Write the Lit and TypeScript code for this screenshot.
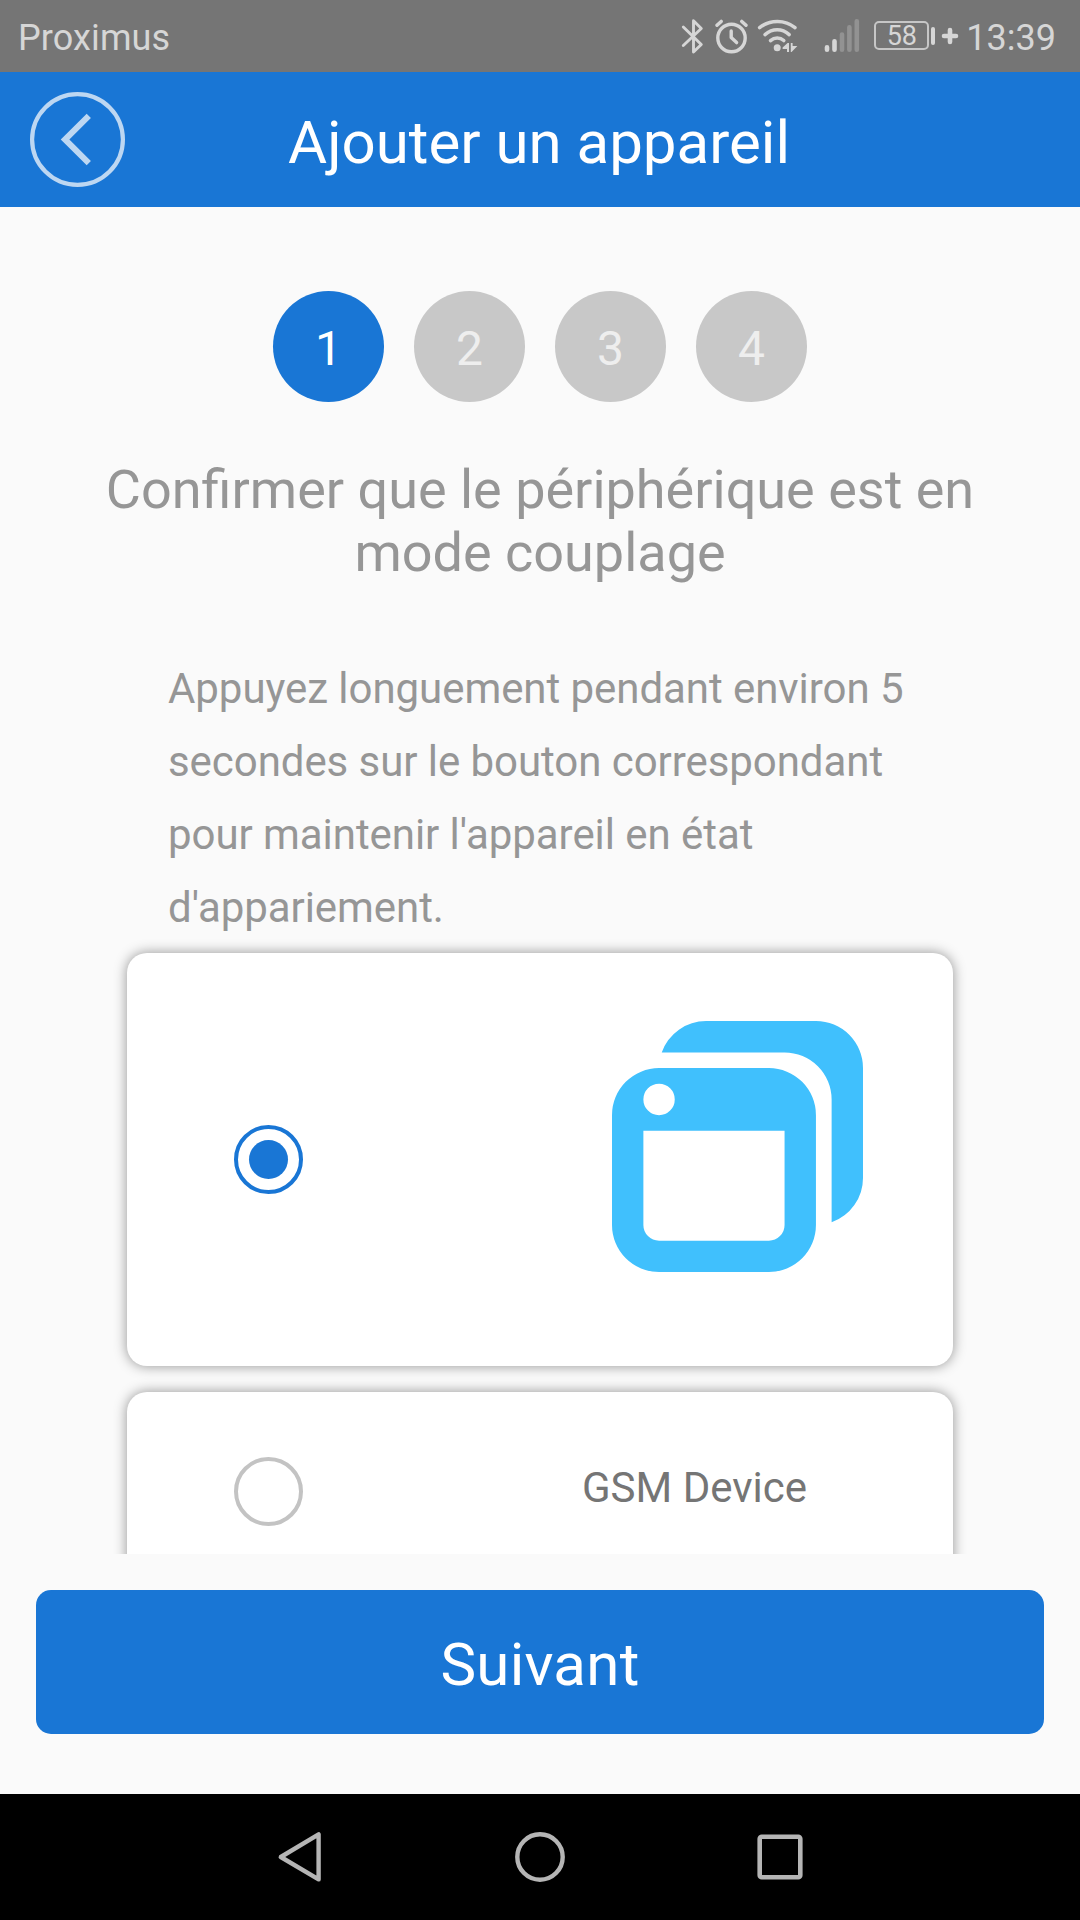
import { LitElement, html, css, svg } from "lit";
import { customElement, state } from "lit/decorators.js";
import { classMap } from "lit/directives/class-map.js";

const bluetoothIcon = svg`
  <svg width="24" height="40" viewBox="680 16 24 40" fill="none" stroke="#d6d6d6" stroke-width="2.9" stroke-linejoin="round" stroke-linecap="round">
    <path d="M683.3 27 L701.3 44.5 L693.5 52 V20.7 L701.3 28.5 L683.3 45.5" />
  </svg>`;

const alarmIcon = svg`
  <svg width="34" height="40" viewBox="714 16 34 40" fill="none" stroke="#d6d6d6" stroke-width="3.4" stroke-linecap="round" stroke-linejoin="round">
    <circle cx="731.5" cy="38" r="13.7" />
    <path d="M731.2 31 V37.5 L736.6 42.6" />
    <path d="M717 25.3 L721.2 21.4 M746 25.3 L741.8 21.4" />
  </svg>`;

const wifiIcon = svg`
  <svg width="42" height="40" viewBox="756 16 42 40" fill="none" stroke="#d6d6d6" stroke-width="3.5" stroke-linecap="round">
    <path d="M759.6 27.6 C770 19.3 785 19.3 795 27.6" />
    <path d="M765 34.6 C772.5 28.2 782 28.2 789.2 34.6" />
    <path d="M770.5 40.6 C774.5 37 780 37 783.8 40.6" />
    <circle cx="777.2" cy="47.8" r="3.5" fill="#d6d6d6" stroke="none" />
    <path d="M789 43 V52 H787 V49 H782.6 V47.5 L787.6 43 Z M790.8 43 H792.6 V46 H797.4 L791.6 52 H790.8 Z" fill="#d6d6d6" stroke="none" />
  </svg>`;

const signalIcon = svg`
  <svg width="38" height="40" viewBox="823 16 38 40" fill="none" stroke-width="4.6" stroke-linecap="round">
    <path d="M827 47.3 V49.7 M834.5 41.2 V49.7" stroke="#d6d6d6" />
    <path d="M842 34.5 V49.7 M849.4 27.3 V49.7 M856.8 21.3 V49.7" stroke="#929292" />
  </svg>`;

const backIcon = svg`
  <svg width="95" height="95" viewBox="0 0 95 95" fill="none" stroke="#bdd7f2">
    <circle cx="47.5" cy="47.5" r="45.4" stroke-width="4.2" />
    <path d="M58.8 23.8 L35 47.5 L58.8 71.2" stroke-width="6" />
  </svg>`;

const windowsIcon = svg`
  <svg width="251" height="251" viewBox="0 0 16 16" fill="#40c0fd">
    <path d="M3.17 2 A3 3 0 0 1 6 0 H13 A3 3 0 0 1 16 3 V10 A3 3 0 0 1 14 12.83 V5 A3 3 0 0 0 11 2 Z" />
    <path fill-rule="evenodd" d="M3 3 H10 A3 3 0 0 1 13 6 V13 A3 3 0 0 1 10 16 H3 A3 3 0 0 1 0 13 V6 A3 3 0 0 1 3 3 Z M4 5 A1 1 0 1 0 2 5 A1 1 0 1 0 4 5 Z M2 7 V13 A1 1 0 0 0 3 14 H10 A1 1 0 0 0 11 13 V7 Z" />
  </svg>`;

const navBackIcon = svg`
  <svg width="60" height="60" viewBox="270 1827 60 60" fill="none" stroke="#b5b5b5" stroke-width="4.4" stroke-linejoin="round">
    <path d="M318.6 1834.4 V1879.4 L280.8 1857 Z" />
  </svg>`;

const navHomeIcon = svg`
  <svg width="60" height="60" viewBox="0 0 60 60" fill="none" stroke="#b5b5b5" stroke-width="4.4">
    <circle cx="30" cy="30" r="22.7" />
  </svg>`;

const navRecentIcon = svg`
  <svg width="60" height="60" viewBox="0 0 60 60" fill="none" stroke="#b5b5b5" stroke-width="4.6">
    <rect x="9.7" y="9.7" width="40.6" height="40.6" rx="2" />
  </svg>`;

@customElement("status-bar")
class StatusBar extends LitElement {
  static styles = css`
    :host {
      display: flex;
      align-items: center;
      height: 72px;
      flex: none;
      padding: 0 24px 0 18px;
      background: #757575;
      color: #d6d6d6;
      font-size: 36px;
    }
    svg { display: block; flex: none; }
    .carrier { flex: 1; padding-top: 4px; letter-spacing: 0.12px; }
    .icons { display: flex; align-items: center; }
    .alarm { margin-left: 10px; }
    .wifi { margin-left: 8px; }
    .signal { margin-left: 25px; }
    .battery {
      box-sizing: border-box;
      width: 55px;
      height: 29px;
      margin: 0 0 1px 13px;
      border: 2px solid #c6c6c6;
      border-radius: 5px;
      font-size: 27px;
      line-height: 26px;
      text-align: center;
    }
    .tip { width: 4px; height: 18px; margin-left: 2px; border-radius: 2px; background: #d6d6d6; }
    .plus { margin-left: 6px; }
    .clock { margin-left: 7px; padding-top: 4px; }
  `;

  render() {
    return html`
      <span class="carrier">Proximus</span>
      <div class="icons">
        ${bluetoothIcon}
        <div class="alarm">${alarmIcon}</div>
        <div class="wifi">${wifiIcon}</div>
        <div class="signal">${signalIcon}</div>
        <div class="battery">58</div>
        <div class="tip"></div>
        <svg class="plus" width="18" height="18" viewBox="0 0 18 18" fill="none" stroke="#d6d6d6" stroke-width="4.6" stroke-linecap="round">
          <path d="M9 3 V15 M3 9 H15" />
        </svg>
        <span class="clock">13:39</span>
      </div>
    `;
  }
}

@customElement("app-root")
class AppRoot extends LitElement {
  @state() step = 1;
  @state() selected = "wifi";

  static styles = css`
    :host {
      display: flex;
      flex-direction: column;
      box-sizing: border-box;
      width: 1080px;
      height: 1920px;
      overflow: hidden;
      background: #fafafa;
      font-family: Roboto, "Liberation Sans", sans-serif;
    }
    svg { display: block; }
    button { border: 0; padding: 0; background: none; font: inherit; }
    .header {
      display: grid;
      grid-template-columns: 125px 1fr 125px;
      align-items: center;
      height: 135px;
      flex: none;
      background: #1976d5;
      color: #fff;
    }
    .back { justify-self: end; }
    .title { margin: 0; padding: 7px 2px 0 0; text-align: center; font-size: 60px; font-weight: 400; line-height: 70px; }
    .content { flex: none; height: 1347px; overflow: hidden; }
    .steps { display: flex; justify-content: center; gap: 30px; padding-top: 84px; }
    .step {
      box-sizing: border-box;
      width: 111px;
      height: 111px;
      padding-top: 2px;
      border-radius: 50%;
      background: #c8c8c8;
      color: #eee;
      font-size: 48px;
      line-height: 111px;
      text-align: center;
    }
    .step.active { background: #1976d5; color: #fff; }
    .heading { margin: 56px 90px 0; color: #969696; font-size: 54px; font-weight: 400; line-height: 63px; text-align: center; }
    .text { margin: 68px 168px 0; color: #969696; font-size: 42px; line-height: 73px; letter-spacing: -0.06px; }
    .cards { display: flex; flex-direction: column; gap: 26px; margin: 9px 127px 0; }
    .card {
      display: flex;
      align-items: center;
      box-sizing: border-box;
      height: 199px;
      padding: 0 90px 0 107px;
      border-radius: 20px;
      background: #fff;
      box-shadow: 0 0 13px rgba(0, 0, 0, 0.42);
    }
    .card.tall { height: 413px; }
    .radio {
      display: flex;
      align-items: center;
      justify-content: center;
      box-sizing: border-box;
      width: 69px;
      height: 69px;
      border: 4px solid #c3c3c3;
      border-radius: 50%;
    }
    .radio.checked { border-color: #1976d5; }
    .dot { width: 39px; height: 39px; border-radius: 50%; background: #1976d5; }
    .picture { margin: 0 0 26px auto; }
    .label { margin-left: 279px; padding-bottom: 7px; color: #757575; font-size: 42px; line-height: 50px; }
    .footer { flex: 1; padding: 36px 36px 0; }
    .next {
      display: block;
      box-sizing: border-box;
      width: 100%;
      height: 144px;
      padding-top: 4px;
      border-radius: 15px;
      background: #1976d5;
      color: #fff;
      font-size: 60px;
      letter-spacing: 0.25px;
    }
    .nav {
      display: flex;
      align-items: center;
      justify-content: center;
      gap: 180px;
      height: 126px;
      flex: none;
      background: #000;
    }
  `;

  renderRadio(id: string) {
    const checked = this.selected === id;
    return html`<div class=${classMap({ radio: true, checked })}>
      ${checked ? html`<div class="dot"></div>` : null}
    </div>`;
  }

  render() {
    return html`
      <status-bar></status-bar>
      <header class="header">
        <button class="back">${backIcon}</button>
        <h1 class="title">Ajouter un appareil</h1>
      </header>
      <main class="content">
        <div class="steps">
          ${[1, 2, 3, 4].map(
            (n) => html`<div class=${classMap({ step: true, active: n === this.step })}>${n}</div>`
          )}
        </div>
        <h2 class="heading">Confirmer que le périphérique est en mode couplage</h2>
        <p class="text">Appuyez longuement pendant environ 5<br />secondes sur le bouton correspondant<br />pour maintenir l'appareil en état<br />d'appariement.</p>
        <div class="cards">
          <div class="card tall" @click=${() => (this.selected = "wifi")}>
            ${this.renderRadio("wifi")}
            <div class="picture">${windowsIcon}</div>
          </div>
          <div class="card" @click=${() => (this.selected = "gsm")}>
            ${this.renderRadio("gsm")}
            <span class="label">GSM Device</span>
          </div>
        </div>
      </main>
      <div class="footer"><button class="next">Suivant</button></div>
      <nav class="nav">${navBackIcon}${navHomeIcon}${navRecentIcon}</nav>
    `;
  }
}
